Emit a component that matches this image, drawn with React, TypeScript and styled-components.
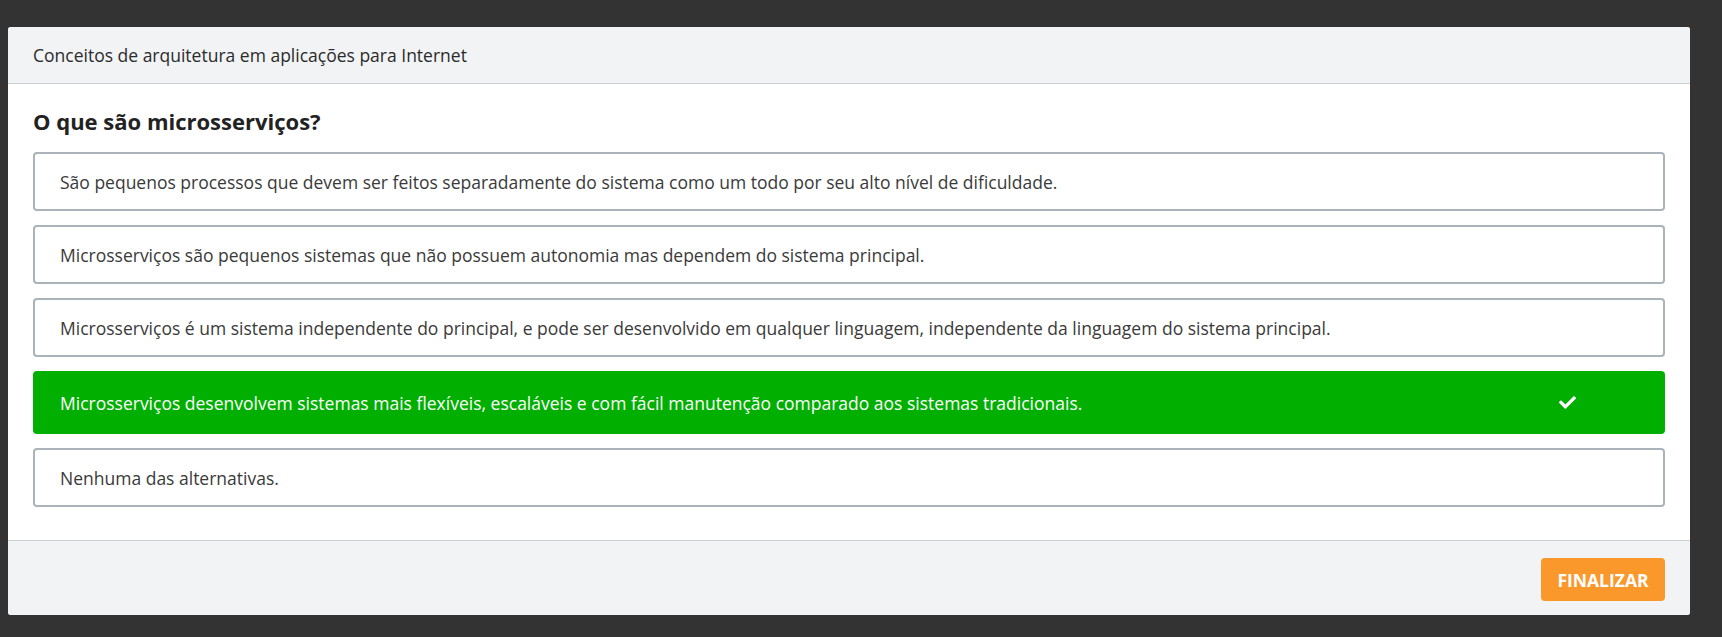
import React from "react";
import styled, { createGlobalStyle } from "styled-components";
import { FaCheck } from "react-icons/fa";

const GlobalStyle = createGlobalStyle`
  html, body {
    margin: 0;
    padding: 0;
    background-color: #333333;
    font-family: "Open Sans", "Noto Sans", sans-serif;
  }
`;

const Page = styled.div`
  min-height: 637px;
  padding: 27px 32px 0 8px;
  box-sizing: border-box;
`;
const Card = styled.div`
  background-color: #ffffff;
  border-radius: 3px;
  overflow: hidden;
`;
const Header = styled.div`
  display: flex;
  align-items: center;
  height: 56px;
  padding: 0 25px;
  background-color: #f2f3f5;
  border-bottom: 1px solid #cdd0d4;
  font-size: 17.5px;
  color: #2b2b2b;
`;
const Body = styled.div`
  padding: 24px 25px 33px;
`;
const Question = styled.div`
  font-weight: 700;
  font-size: 22px;
  line-height: 26px;
  color: #222222;
  margin-bottom: 18px;
`;
const Options = styled.div`
  display: flex;
  flex-direction: column;
  gap: 14px;
`;
const Option = styled.div<{ $correct?: boolean }>`
  display: flex;
  align-items: center;
  justify-content: space-between;
  height: ${(props) => (props.$correct ? "63px" : "59px")};
  box-sizing: border-box;
  padding: 0 89px 0 ${(props) => (props.$correct ? "27px" : "25px")};
  border-radius: 4px;
  border: ${(props) => (props.$correct ? "none" : "2px solid #aab2ba")};
  background-color: ${(props) => (props.$correct ? "#00af00" : "#ffffff")};
  color: ${(props) => (props.$correct ? "#ffffff" : "#3a3a3a")};
  font-size: 17.5px;
  cursor: pointer;
`;
const Check = styled.span`
  display: flex;
  color: #ffffff;
  margin-left: 20px;
`;
const Footer = styled.div`
  display: flex;
  justify-content: flex-end;
  align-items: flex-start;
  height: 75px;
  box-sizing: border-box;
  padding: 17px 25px 0;
  background-color: #f2f3f5;
  border-top: 1px solid #cdd0d4;
`;
const Finish = styled.button`
  height: 43px;
  width: 124px;
  border: none;
  border-radius: 4px;
  background-color: #fa982c;
  color: #ffffff;
  font-family: "Open Sans", "Noto Sans", sans-serif;
  font-weight: 700;
  font-size: 17.5px;
  cursor: pointer;
`;

const alternatives = [
  "São pequenos processos que devem ser feitos separadamente do sistema como um todo por seu alto nível de dificuldade.",
  "Microsserviços são pequenos sistemas que não possuem autonomia mas dependem do sistema principal.",
  "Microsserviços é um sistema independente do principal, e pode ser desenvolvido em qualquer linguagem, independente da linguagem do sistema principal.",
  "Microsserviços desenvolvem sistemas mais flexíveis, escaláveis e com fácil manutenção comparado aos sistemas tradicionais.",
  "Nenhuma das alternativas.",
];
const correctIndex = 3;

const App: React.FC = () => {
  return (
    <Page>
      <GlobalStyle />
      <Card>
        <Header>Conceitos de arquitetura em aplicações para Internet</Header>
        <Body>
          <Question>O que são microsserviços?</Question>
          <Options>
            {alternatives.map((text, index) => (
              <Option key={index} $correct={index === correctIndex}>
                <span>{text}</span>
                {index === correctIndex && (
                  <Check>
                    <FaCheck size={17} />
                  </Check>
                )}
              </Option>
            ))}
          </Options>
        </Body>
        <Footer>
          <Finish>FINALIZAR</Finish>
        </Footer>
      </Card>
    </Page>
  );
};

export default App;
